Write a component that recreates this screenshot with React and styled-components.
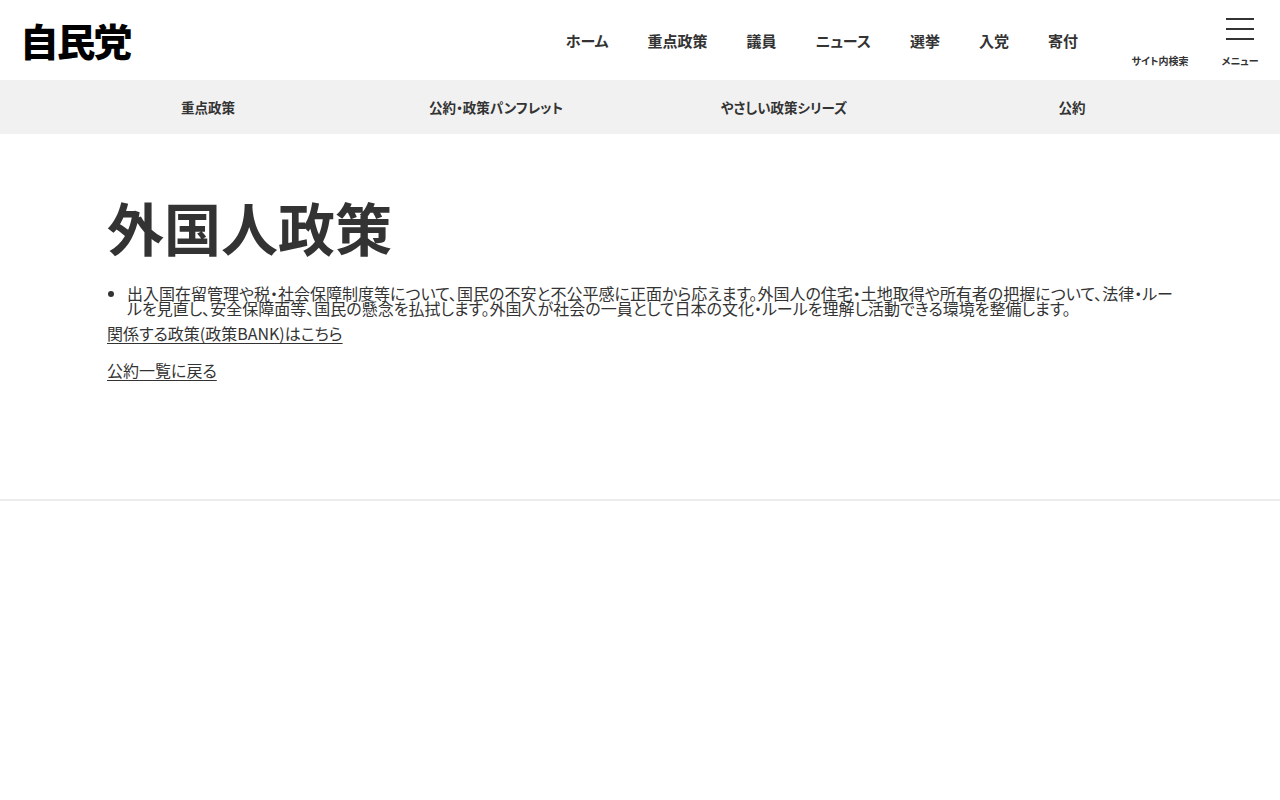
import React from "react";
import styled, { createGlobalStyle } from "styled-components";

const Global = createGlobalStyle`
  html, body { margin: 0; padding: 0; background: #fff; }
  body {
    font-family: "Noto Sans CJK JP", "Noto Sans", sans-serif;
    color: #333;
    font-feature-settings: "palt";
  }
  * { box-sizing: border-box; }
`;

const Header = styled.header`
  height: 80px;
  display: flex;
  align-items: center;
  padding-left: 20px;
`;

const Logo = styled.a`
  font-family: "Noto Sans CJK JP", sans-serif;
  font-weight: 900;
  font-size: 38px;
  line-height: 1;
  color: #000;
  letter-spacing: -2px;
  text-decoration: none;
  font-feature-settings: normal;
  transform: scaleX(1.02);
  transform-origin: left center;
`;

const Spacer = styled.div`
  flex: 1;
`;

const Nav = styled.nav`
  display: flex;
  gap: 39px;
  margin-right: 42px;
`;

const NavItem = styled.a`
  font-size: 15px;
  font-weight: 700;
  color: #333;
  text-decoration: none;
  line-height: 1;
  padding-top: 1px;
`;

const IconButton = styled.a`
  width: 80px;
  height: 80px;
  display: flex;
  flex-direction: column;
  align-items: center;
  justify-content: flex-end;
  padding-bottom: 14px;
  text-decoration: none;
  color: #333;
  position: relative;
`;

const IconLabel = styled.span`
  font-size: 10px;
  font-weight: 700;
  line-height: 1;
  color: #333;
`;

const Burger = styled.span`
  position: absolute;
  top: 18px;
  left: 26px;
  width: 28px;
  height: 22px;
  display: flex;
  flex-direction: column;
  justify-content: space-between;
  & > i {
    display: block;
    height: 2px;
    background: #333;
  }
`;

const SubNav = styled.nav`
  background: #f1f1f1;
  height: 54px;
`;

const SubNavInner = styled.div`
  width: 1152px;
  margin: 0 auto;
  display: grid;
  grid-template-columns: repeat(4, 1fr);
  height: 100%;
  align-items: center;
`;

const SubNavItem = styled.a`
  text-align: center;
  font-size: 13.5px;
  font-weight: 700;
  color: #333;
  text-decoration: none;
  line-height: 1;
  padding-top: 2px;
`;

const Main = styled.main`
  width: 1066px;
  margin: 0 auto;
  padding: 58px 0 104px;
`;

const Title = styled.h1`
  margin: 0 0 26px;
  font-size: 57px;
  font-weight: 700;
  line-height: 68px;
  color: #333;
`;

const List = styled.ul`
  margin: 0 0 5px;
  padding-left: 20px;
  font-size: 16px;
  line-height: 15px;
`;

const LinkRow = styled.p`
  margin: 0 0 13px;
  font-size: 16px;
  line-height: 24px;
`;

const TextLink = styled.a`
  color: #333;
  text-decoration: underline;
  text-underline-offset: 3px;
  text-decoration-thickness: 1px;
`;

const Divider = styled.hr`
  margin: 0;
  border: 0;
  height: 2px;
  background: #ececec;
`;

const navItems = ["ホーム", "重点政策", "議員", "ニュース", "選挙", "入党", "寄付"];
const subItems = ["重点政策", "公約・政策パンフレット", "やさしい政策シリーズ", "公約"];

export default function App() {
  return (
    <>
      <Global />
      <Header>
        <Logo href="#">自民党</Logo>
        <Spacer />
        <Nav>
          {navItems.map((n) => (
            <NavItem key={n} href="#">{n}</NavItem>
          ))}
        </Nav>
        <IconButton href="#">
          <IconLabel>サイト内検索</IconLabel>
        </IconButton>
        <IconButton href="#">
          <Burger><i /><i /><i /></Burger>
          <IconLabel>メニュー</IconLabel>
        </IconButton>
      </Header>
      <SubNav>
        <SubNavInner>
          {subItems.map((s) => (
            <SubNavItem key={s} href="#">{s}</SubNavItem>
          ))}
        </SubNavInner>
      </SubNav>
      <Main>
        <Title>外国人政策</Title>
        <List>
          <li>
            出入国在留管理や税・社会保障制度等について、国民の不安と不公平感に正面から応えます。外国人の住宅・土地取得や所有者の把握について、法律・ルールを見直し、安全保障面等、国民の懸念を払拭します。外国人が社会の一員として日本の文化・ルールを理解し活動できる環境を整備します。
          </li>
        </List>
        <LinkRow>
          <TextLink href="#">関係する政策(政策BANK)はこちら</TextLink>
        </LinkRow>
        <LinkRow>
          <TextLink href="#">公約一覧に戻る</TextLink>
        </LinkRow>
      </Main>
      <Divider />
    </>
  );
}
